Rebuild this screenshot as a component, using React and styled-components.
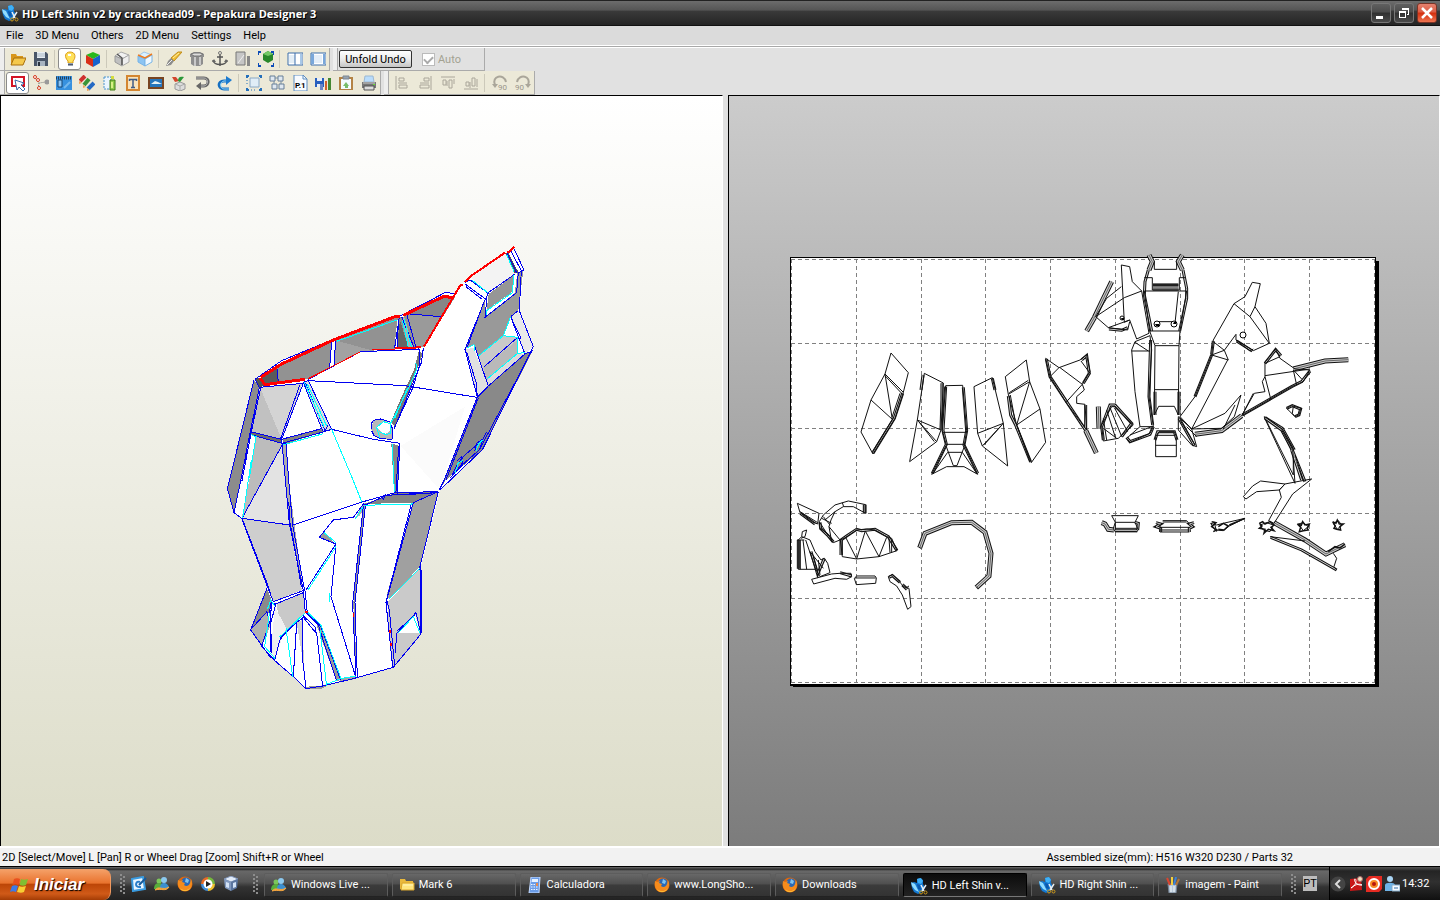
import React, { useState } from "react";
import styled, { createGlobalStyle } from "styled-components";

const GlobalStyle = createGlobalStyle`
    * {
        box-sizing: border-box;
    }
    body {
        margin: 0;
        overflow: hidden;
        font-family: Roboto, "Liberation Sans", sans-serif;
        font-size: 11px;
        color: #000;
        background: #e1e1e1;
    }
    button, input {
        font: inherit;
        color: inherit;
        padding: 0;
        margin: 0;
    }
`;

const WhaleIcon = () => (
    <Icon viewBox="0 0 18 18" $size={18}>
        <path d="M1 6l3-1 3 1 0-4 3-1 3 2 0 4 2 4-3 4-4 2-4-2-2-4z" fill="#1478d0" />
        <path d="M1 5l4 2 2 4 2 4-4-2-3-4z" fill="#8fdcff" />
        <path d="M7 2l4-1 2 3-2 3-3-1z" fill="#3fb0f6" />
        <path d="M7 7l3 1 1 5-3-1z" fill="#0b58ac" />
        <path d="M11 8l3 6M16 8l-4 6" stroke="#e8eef2" strokeWidth="1.5" />
        <circle cx="11" cy="15.5" r="1.5" fill="none" stroke="#cf9b1c" />
        <circle cx="15.5" cy="15.5" r="1.5" fill="none" stroke="#cf9b1c" />
    </Icon>
);

const FirefoxIcon = () => (
    <Icon viewBox="0 0 16 16">
        <circle cx="8" cy="8" r="7.5" fill="#e0680c" />
        <circle cx="9" cy="6.5" r="5" fill="#2b68b5" />
        <path d="M9 2l3 2-1 3-3-1z" fill="#7fc3ef" />
        <path d="M1 4l2 1 3-1-1 2 3 1-1 2c2 2 5 1 6-2l1-4c3 6-1 12-6 12S0 11 1 4z" fill="#f58b1c" />
        <path d="M3 12c3 3 8 3 11-1-1 4-9 6-11 1z" fill="#fdc53c" />
    </Icon>
);

const MessengerIcon = () => (
    <Icon viewBox="0 0 16 16">
        <circle cx="5" cy="5" r="2.5" fill="#7cc75a" />
        <path d="M0 13c0-4 2-6 5-6s4 2 5 4l-4 2z" fill="#58ad3c" />
        <circle cx="10" cy="4" r="3" fill="#8cc9ef" />
        <path d="M6 12c0-4 2-5 4-5s5 2 5 5l-4 1z" fill="#3b8fd0" />
        <path d="M1 14c4-5 8 1 14-3-3 5-8 1-14 3z" fill="#f4a640" stroke="#f4a640" />
    </Icon>
);

const FolderIcon = () => (
    <Icon viewBox="0 0 16 16">
        <path d="M1 2h5l1 2h7v3H3v5H1z" fill="#e9b93c" />
        <path d="M3 6h12v7H2z" fill="#ffe67e" stroke="#d9a52c" />
        <path d="M4 8h10" stroke="#fff6c0" />
    </Icon>
);

const CalcIcon = () => (
    <Icon viewBox="0 0 16 16">
        <path d="M4 0h9l-1 16H2z" fill="#6b9de8" stroke="#c5dbff" />
        <path d="M5 2h6v3H4.5z" fill="#e7f2ff" />
        <path d="M4 7.5h7M4 10h7M4 12.5h7" stroke="#eef5ff" strokeDasharray="1.5 1" />
        <path d="M9 6h2v3H9z" fill="#e78a4a" />
    </Icon>
);

const PaintIcon = () => (
    <Icon viewBox="0 0 16 16">
        <path d="M3 7h9l-1 9H4z" fill="#b8c8d8" stroke="#738091" />
        <path d="M5 8L2 1" stroke="#d94530" strokeWidth="2" />
        <path d="M7 8V0" stroke="#f3cf3c" strokeWidth="2" />
        <path d="M9 8l2-8" stroke="#3b82d8" strokeWidth="2" />
        <path d="M11 8l3-6" stroke="#b57536" strokeWidth="2" />
        <path d="M6 9v6M9 9v6" stroke="#f2f6fa" />
    </Icon>
);

const WindowsFlag = () => (
    <Icon viewBox="0 0 20 18" $size={20}>
        <path d="M4 3c2-1 4-1 6 0L8.5 9c-2-1-4-1-6 0z" fill="#e8501e" />
        <path d="M11 3c2 1 4 1 7 0l-2 6c-2 1-4 1-6.5 0z" fill="#80bf32" />
        <path d="M2 10c2-1 4-1 6 0l-2 6c-2-1-4-1-6 0z" fill="#3c7be8" />
        <path d="M9 10c2 1 4 1 7 0l-2 6c-2 1-4 1-7 0z" fill="#f8cf34" />
    </Icon>
);

// 16x16 drawings for the two tool strips
const glyphs = {
    open: (
        <>
            <path d="M1 3h5l1 2h6v3H4l-3 6z" fill="#d9971b" />
            <path d="M4 7h12l-3 7H1z" fill="#f5c94c" stroke="#a96f0d" />
        </>
    ),
    save: (
        <>
            <path d="M1 1h12l2 2v12H1z" fill="#4a5668" />
            <path d="M4 1h8v6H4z" fill="#e8eef4" />
            <path d="M4 10h8v5H4z" fill="#a8b4c0" />
            <path d="M5 11h2v4H5z" fill="#2c3440" />
            <path d="M4 3h8M4 5h8" stroke="#aab8c4" />
        </>
    ),
    bulb: (
        <>
            <path d="M8 1c6 0 6 6 3 9v2H6v-2C2 6 3 1 8 1z" fill="#ffe25b" stroke="#dc9d18" />
            <path d="M6 3h3v2H6z" fill="#fff" />
            <path d="M6 12h5v3H6z" fill="#9aa4b4" />
            <path d="M6 13.5h5" stroke="#4f5b70" />
        </>
    ),
    cube: (
        <>
            <path d="M1 4l7-3 7 3-7 4z" fill="#28b81c" />
            <path d="M1 4l7 4v8l-7-4z" fill="#d92f18" />
            <path d="M15 4L8 8v8l7-4z" fill="#1863cc" />
        </>
    ),
    box: (
        <>
            <path d="M1 5l6-4 8 3-7 4z" fill="#f2f2f2" stroke="#aaa" />
            <path d="M1 5l7 3v7l-7-4z" fill="#c0c0c0" stroke="#999" />
            <path d="M15 4L8 8v7l7-4z" fill="#eee" stroke="#aaa" />
            <path d="M3 3l5 4v7" fill="none" stroke="#555" strokeWidth="1.5" />
        </>
    ),
    boxBlue: (
        <>
            <path d="M1 5l6-4 8 3-7 4z" fill="#d9f0ff" stroke="#9cc6ea" />
            <path d="M1 5l7 3v7l-7-4z" fill="#8cc4f2" stroke="#78b4e6" />
            <path d="M15 4L8 8v7l7-4z" fill="#eef8ff" stroke="#78b4e6" />
            <path d="M1 4l7 3 7-4" fill="none" stroke="#ee7b1d" strokeWidth="1.5" />
        </>
    ),
    knife: (
        <>
            <path d="M5 7l7-6h4l-8 9z" fill="#f1bf32" stroke="#c08d1c" />
            <path d="M0 15l2-5 3-3 3 3-3 4z" fill="#8d8d8d" />
            <path d="M7 7l6-5" stroke="#fff0a8" />
            <path d="M1 14l5-5" stroke="#eee" />
        </>
    ),
    cylinder: (
        <>
            <path d="M1 3l4-2h6l4 2v3h-1v7l-3 2H5l-3-2V6H1z" fill="#8e8e8e" />
            <path d="M2 3l3-1h6l3 1-3 2H5z" fill="#ddd" stroke="#777" />
            <path d="M6 6v9M11 6v8" stroke="#c9c9c9" strokeWidth="2" />
        </>
    ),
    anchor: (
        <>
            <path d="M8 3v12M1 9c0 6 14 6 14 0M5 6h6" stroke="#555" strokeWidth="1.5" fill="none" />
            <path d="M0 11l2-3 2 3zM12 11l2-3 2 3z" fill="#666" />
            <circle cx="8" cy="2" r="1.5" fill="none" stroke="#777" />
        </>
    ),
    plane: (
        <>
            <path d="M1 1h9v13H1z" fill="#c6c6c6" stroke="#777" />
            <path d="M12 5h3v10h-3z" fill="#888" />
            <path d="M3 12l6-8" stroke="#eee" />
        </>
    ),
    fit: (
        <>
            <path d="M0 4V1h3M13 1h3v3M0 12v3h3M13 15h3v-3" stroke="#0c4bb8" strokeWidth="2" fill="none" />
            <path d="M5 3l5-3 5 3v6l-5 3-5-3z" fill="#28872a" />
            <path d="M5 3l5 2 5-2-5-3z" fill="#74c967" />
        </>
    ),
    split: (
        <>
            <path d="M1 2h15v12H1z" fill="#fff" stroke="#3d6eaa" />
            <path d="M2 4h6v8H2z" fill="#e4eef6" />
            <path d="M8 2v12" stroke="#3d6eaa" />
            <path d="M13 3h2v10h-2z" fill="#a8c8e8" />
        </>
    ),
    single: (
        <>
            <path d="M1 2h15v12H1z" fill="#fff" stroke="#3d6eaa" />
            <path d="M1 3h3v10H1zM13 3h2v10h-2z" fill="#79a7da" />
            <path d="M4 4h8v8H4z" fill="#e4eef8" />
        </>
    ),
    select: (
        <>
            <path d="M2 2h12v9H2z" fill="#fff" stroke="#d31425" strokeWidth="2" />
            <path d="M5 5l9 3-3 2 4 4-2 2-4-4-2 3z" fill="#fff" stroke="#3a6ca8" />
        </>
    ),
    edge: (
        <>
            <path d="M2 3l4 5 7-1M6 8l-1 6" stroke="#777" fill="none" strokeDasharray="1 1" />
            <circle cx="2" cy="2" r="1.5" fill="#fff" stroke="#d63a1e" />
            <circle cx="6" cy="13" r="1.5" fill="#fff" stroke="#d63a1e" />
            <circle cx="5" cy="5" r="1.5" fill="#fff" stroke="#d63a1e" />
            <circle cx="14" cy="7" r="2.5" fill="#999" />
        </>
    ),
    zip: (
        <>
            <path d="M0 1h16v14H0z" fill="#3791df" />
            <path d="M0 3h16" stroke="#24405c" strokeWidth="3" strokeDasharray="1 1" />
            <path d="M2 5h4v7H2z" stroke="#174674" fill="#8dc6f5" />
            <path d="M8 13l6-6" stroke="#73b8ef" strokeWidth="2" />
        </>
    ),
    pencils: (
        <>
            <path d="M1 6l5-5" stroke="#cf3130" strokeWidth="4" />
            <path d="M5 10l5-6" stroke="#3b9438" strokeWidth="4" />
            <path d="M9 14l6-6" stroke="#246ac4" strokeWidth="4" />
            <path d="M0 6l3 2-3 1zM4 10l3 2-3 1zM8 13l3 2-3 1z" fill="#f0a256" />
        </>
    ),
    glue: (
        <>
            <path d="M2 2h7v12H2z" fill="#eaf5ff" stroke="#4d94cc" strokeDasharray="2 1" />
            <path d="M8 5h5v10H8z" fill="#8fcb4a" stroke="#3f7d18" />
            <path d="M9 1h3v3H9z" fill="#d5dc3c" />
            <path d="M10 7v6" stroke="#d6ef86" strokeWidth="2" />
        </>
    ),
    text: (
        <>
            <path d="M2 1h12v14H2z" fill="#f8e3bd" stroke="#d48631" strokeWidth="2" />
            <path d="M4.5 6V4.5h7V6M8 4v9M6 12.5h4" fill="none" stroke="#405c86" strokeWidth="1.5" />
        </>
    ),
    picture: (
        <>
            <path d="M0 2h16v12H0z" fill="#784523" />
            <path d="M2 4h12v8H2z" fill="#2776bc" />
            <path d="M3 9l4-3 3 1 4 2z" fill="#e7f2f5" />
        </>
    ),
    fold: (
        <>
            <path d="M4 9l5-2 5 2v5l-5 2-5-2z" fill="#ddd" stroke="#999" />
            <path d="M1 2l4 0 3 4-4 1z" fill="#d3462e" />
            <path d="M7 6c0-4 2-5 6-4l-4 5z" fill="#2b9838" />
            <path d="M4 9l5 2 5-2M9 11v5" stroke="#aaa" fill="none" />
        </>
    ),
    undo: (
        <>
            <path d="M2 3h8c6 0 5 8 0 8H6" fill="none" stroke="#666" strokeWidth="3" />
            <path d="M2 3h8c5 0 4 8 0 8H6" fill="none" stroke="#bbb" />
            <path d="M7 7v8l-5-4z" fill="#666" />
        </>
    ),
    redo: (
        <>
            <path d="M12 14H7C1 14 0 6 7 6h4" fill="none" stroke="#166fc1" strokeWidth="3" />
            <path d="M12 14H7C3 14 2 7 7 6h4" fill="none" stroke="#8fd6fa" />
            <path d="M9 1v9l6-5z" fill="#1c7bd0" />
        </>
    ),
    frame: (
        <>
            <path d="M4 3h9v9H4z" fill="#e0edf7" stroke="#8aa8c4" />
            <path d="M1 3V1h2M13 1h2v2M1 13v2h2M13 15h2v-2" stroke="#2570bb" strokeWidth="2" fill="none" />
            <path d="M1 5v6M5 15h6" stroke="#2570bb" strokeDasharray="1 2" />
        </>
    ),
    grid: (
        <>
            <path d="M1 1h5v5H1zM9 1h5v5H9zM3 9h5v5H3zM10 9h5v5h-5z" fill="#dfe8f1" stroke="#667f98" />
            <path d="M6 3h3M5 6v3M12 6v3" stroke="#778da3" />
        </>
    ),
    chart: (
        <>
            <path d="M0 3h9v9H0z" fill="#275ebe" />
            <path d="M2 3h5v3H2zM2 9h5v3H2z" fill="#e7edf5" />
            <path d="M10 6h2v9h-2z" fill="#d1602c" />
            <path d="M13 3h3v12h-3z" fill="#448832" />
            <path d="M5 9h3v6H5z" fill="#6a86c6" />
        </>
    ),
    clip: (
        <>
            <path d="M1 2h14v13H1z" fill="#b48345" />
            <path d="M3 4h10v10H3z" fill="#f5fbff" />
            <path d="M5 1h6v3H5z" fill="#98a4b1" stroke="#7c8792" />
            <path d="M5 11l3-4 3 4zM7 10h3v3H7z" fill="#77bd6b" />
        </>
    ),
    printer: (
        <>
            <path d="M4 1h8l1 6H3z" fill="#b9dcfb" stroke="#9cb8d2" />
            <path d="M1 7h14v6H1z" fill="#777" />
            <path d="M3 11h10v4H3z" fill="#ddd" stroke="#555" />
            <path d="M2 8h12" stroke="#ccc" />
            <path d="M12 9.5h2" stroke="#6d3" />
        </>
    ),
    alignLeft: <path d="M2 1v14M5 3h5v3H5zM5 10h8v3H5zM4 8h9" fill="none" stroke="#aaa69a" />,
    alignRight: <path d="M14 1v14M7 3h5v3H7zM3 10h9v3H3zM3 8h9" fill="none" stroke="#aaa69a" />,
    alignTop: <path d="M1 2h14M3 5h3v5H3zM9 5h3v8H9zM7 6v5M14 4v5" fill="none" stroke="#aaa69a" />,
    alignBottom: <path d="M1 14h14M3 7h3v4H3zM9 3h3v8H9zM7 7v6M14 4v8" fill="none" stroke="#aaa69a" />,
    rotLeft: (
        <>
            <path d="M3 10c-4-9 9-12 11-3" fill="none" stroke="#aaa69a" strokeWidth="2" />
            <path d="M0 9h6l-3 4z" fill="#aaa69a" />
            <text x="6" y="15" fontSize="8" fill="#99958a">90</text>
        </>
    ),
    rotRight: (
        <>
            <path d="M13 10c4-9-9-12-11-3" fill="none" stroke="#aaa69a" strokeWidth="2" />
            <path d="M16 9h-6l3 4z" fill="#aaa69a" />
            <text x="0" y="15" fontSize="8" fill="#99958a">90</text>
        </>
    ),
    page: (
        <>
            <path d="M2 0h9l4 4v12H2z" fill="#f8fbff" stroke="#5d8cc0" />
            <path d="M11 0v4h4" fill="none" stroke="#5d8cc0" />
            <text x="3" y="13" fontSize="8" fontWeight="bold">P.1</text>
        </>
    ),
};

const ToolSet = ({ groups, active, onPick, disabled }) =>
    groups.map((group, i) => (
        <React.Fragment key={i}>
            {i > 0 && <Separator />}
            {group.map((name) => (
                <ToolButton
                    key={name}
                    aria-label={name}
                    disabled={disabled}
                    $active={active === name}
                    onClick={() => onPick && onPick(name)}
                >
                    <Icon viewBox="0 0 16 16">{glyphs[name]}</Icon>
                </ToolButton>
            ))}
        </React.Fragment>
    ));

// model faces, three units to a pixel, origin at the top of the part
const faces = [
    ["#fff", "105,418 185,362 340,298 540,228 675,158 705,160 722,132 750,110 855,38 880,22 912,90 898,212 940,320 788,628 660,750 603,978 603,1182 520,1282 408,1314 258,1346 220,1310 148,1248 92,1170 143,1042 65,835 42,818 22,745 30,715"],
    ["#8c8c8c", "102,420 118,442 90,580 62,722 42,818 22,745 30,715"],
    ["#555", "105,414 120,416 136,437 118,442"],
    ["#929292", "122,412 185,372 340,300 530,230 548,232 675,168 705,172 612,322 455,332 422,335 340,378 260,418 135,438"],
    ["#5a5a5a", "124,412 172,384 175,430 136,437"],
    ["#a2a2a2", "350,302 455,331 422,335 343,378"],
    ["#fff", "335,306 348,300 343,376 329,382"],
    ["#fff", "532,240 538,240 531,322 523,324"],
    ["#656565", "540,240 565,322 531,322"],
    ["#b0b0b0", "545,230 552,230 582,322 565,322"],
    ["#868686", "560,221 672,170 702,174 662,230"],
    ["#9a9a9a", "562,222 662,230 612,322 588,322"],
    ["#c1c1c1", "120,442 185,598 92,575"],
    ["#d4d4d4", "120,442 248,430 185,598"],
    ["#6b6b6b", "92,574 184,597 186,609 90,584"],
    ["#828282", "186,597 305,566 325,566 310,576 195,612"],
    ["#ddd", "250,427 265,422 335,568 308,573"],
    ["#bcbcbc", "108,590 188,610 65,835 88,720"],
    ["#e3e3e3", "188,610 208,855 65,835"],
    ["#adadad", "188,612 198,610 206,720 250,1052 240,1020 208,850"],
    ["#868686", "514,611 541,618 532,758 522,755"],
    ["#777", "597,330 608,342 573,440 524,560 512,548 545,470 582,390"],
    ["#f3f3f3", "750,110 855,38 888,100 805,160"],
    ["#555", "858,40 866,40 896,98 884,100"],
    ["#999", "735,328 794,180 795,232 884,160 892,100 910,92 895,212 872,230 850,285 775,348 762,314 745,320"],
    ["#969696", "806,162 882,105 878,155 800,210"],
    ["#c9c9c9", "850,287 895,294 893,340 798,424 775,348"],
    ["#b9b9b9", "790,382 893,300 893,340 800,418"],
    ["#e9e9e9", "872,230 895,212 940,320 915,342"],
    ["#fff", "872,232 903,295 855,285"],
    ["#e1e1e1", "735,330 760,322 805,438 772,472"],
    ["#dcdcdc", "805,438 796,425 893,338 915,342"],
    ["#898989", "772,472 805,440 915,342 938,332 788,628 676,722 660,748"],
    ["#fbfbfb", "542,618 735,500 660,750"],
    ["#cecece", "68,835 208,855 246,1050 160,1085"],
    ["#8a8a8a", "141,1045 158,1088 148,1118 92,1170"],
    ["#b0b0b0", "92,1170 141,1115 150,1160 125,1220"],
    ["#c9c9c9", "170,1090 250,1058 256,1118 183,1190"],
    ["#f0f0f0", "165,1100 198,1165 163,1258 152,1240"],
    ["#d0d0d0", "230,1148 248,1140 252,1280 240,1210"],
    ["#838383", "430,792 530,758 655,755 580,788"],
    ["#a0a0a0", "655,755 600,980 508,1077 500,1065 580,790"],
    ["#cacaca", "600,982 603,1182 520,1282 508,1200 502,1088"],
    ["#fff", "535,1180 586,1122 600,1180"],
    ["#969696", "430,790 436,792 405,1088 408,1314 400,1090"],
    ["#999", "298,892 310,878 348,912"],
    ["#a4a4a4", "358,1313 408,1312 404,1318 360,1326"],
    ["#999", "258,1340 320,1338 300,1348 262,1348"],
    ["#999", "290,1156 302,1156 362,1320 350,1324"],
    ["#b0b0b0", "405,835 432,788 440,795 420,826 400,838"],
    ["#b8b8b8", "453,565 461,542 482,537 510,546 518,568 516,598 480,596 462,587"],
    ["#fff", "470,560 488,545 510,548 514,570 492,585"],
];

const blueLines = [
    "105,418 185,362 340,298 540,228 675,158 705,160",
    "102,420 30,715 22,745 42,818 62,722 90,580 118,442 105,418",
    "62,722 66,722 93,580 122,444",
    "118,442 250,430 185,598 92,575",
    "92,584 186,610 310,576 335,568 265,422 250,427 308,573",
    "256,428 315,572 324,556",
    "240,434 181,598",
    "185,598 305,566",
    "185,598 208,850 250,1052",
    "190,610 198,610 206,720 218,855 254,1052",
    "202,780 210,810 208,840 220,900 228,945 244,1040",
    "188,612 66,835 208,855",
    "220,855 430,785 525,758 655,755",
    "265,422 420,430 555,437 770,472",
    "335,568 460,598 540,610 532,758",
    "536,618 528,756",
    "172,388 175,430",
    "335,306 329,382",
    "347,300 342,378",
    "538,232 524,324",
    "536,240 531,322",
    "545,230 582,322",
    "560,221 588,322",
    "560,221 662,230",
    "265,418 422,335 597,328",
    "597,325 600,370 580,440 522,566",
    "610,325 604,368 576,436 525,560",
    "455,568 453,552 461,541 482,537 510,546 518,568 516,598 480,596 462,587 455,572",
    "735,128 750,120 805,160 795,180 735,328 772,472",
    "735,132 795,176",
    "738,140 785,177",
    "792,186 741,324",
    "765,322 805,438 915,342 872,230 903,295",
    "740,336 768,426 772,470",
    "772,472 672,722 658,750",
    "775,474 678,720",
    "772,472 805,438",
    "880,22 912,90 895,98 890,158 795,232 802,160 884,103",
    "872,32 904,92 898,212 940,320 788,628 660,750",
    "862,40 890,98",
    "895,212 872,230",
    "915,342 935,334 780,626",
    "793,380 893,292",
    "695,710 712,672 735,645 788,600 778,630 730,672 690,714",
    "765,632 770,610 790,596 800,576",
    "712,662 724,650 728,668 708,695",
    "42,818 65,835 143,1042 160,1085 250,1052",
    "68,840 146,1042 154,1072",
    "141,1045 92,1170 148,1248 220,1310 258,1346 310,1338 408,1314 520,1282 603,1182 600,980 655,755",
    "95,1166 141,1115 148,1148 125,1220 165,1260",
    "148,1118 153,1090 160,1085",
    "156,1088 152,1120 150,1240",
    "160,1092 168,1090 152,1150 155,1240",
    "160,1095 250,1058",
    "255,1052 262,1118",
    "250,1052 256,1118 190,1182 178,1205 164,1260",
    "255,1130 225,1150 182,1194",
    "230,1150 220,1310",
    "248,1140 247,1250 258,1346",
    "248,1130 282,1172 290,1180 308,1340",
    "258,1118 295,1156 350,1324",
    "262,1118 302,1158 362,1320",
    "246,1140 250,1128 285,1160 286,1175",
    "348,912 258,1050",
    "340,840 298,892 348,912 333,1070 408,1314",
    "340,840 400,832 430,792 436,798 405,1088 412,1314",
    "430,798 398,1090 408,1314",
    "436,795 496,768 525,764 655,758",
    "655,755 580,788 498,1088 518,1280",
    "574,792 500,1078 508,1110 524,1278",
    "530,760 540,765 655,758",
    "486,772 490,778 498,764",
    "526,1240 530,1180 588,1118 603,1182",
    "530,1174 584,1126",
    "603,980 606,1180",
];

const cyanLines = [
    "335,568 395,710 425,785",
    "88,715 108,590 92,584",
    "68,835 94,660",
    "188,615 310,581",
    "253,427 312,560",
    "262,432 320,558",
    "548,244 565,322",
    "552,236 574,320",
    "350,304 530,240",
    "588,370 590,390 565,445 512,550",
    "562,445 524,535",
    "517,612 523,755",
    "432,796 578,792",
    "480,594 470,562 490,545 512,552 513,580 498,584 478,575",
    "860,44 883,97",
    "756,120 803,158",
    "800,225 800,212 877,158 882,106",
    "872,230 850,287 893,292 894,340 915,338",
    "850,287 775,348",
    "742,324 762,314 765,332",
    "800,418 893,340",
    "705,700 715,668 730,662",
    "768,632 776,612 788,600",
    "405,838 430,800",
    "312,878 348,908",
    "348,920 264,1050",
    "330,1060 330,1086",
    "600,984 508,1077",
    "142,1108 152,1081 165,1098",
    "148,1120 134,1220 165,1256",
    "198,1165 218,1310",
    "178,1192 254,1120",
    "264,1118 302,1154 364,1318",
    "300,1170 320,1338",
    "320,1333 362,1316 408,1308",
    "534,1180 580,1130 600,1180",
];

const redLines = [
    ["122,412 185,372 340,300 525,230 540,230", 3],
    ["120,414 135,434 255,418", 3],
    ["550,226 670,170 700,172", 3],
    ["612,320 722,134 730,134", 2],
    ["735,126 750,110 855,38", 2],
    ["862,38 870,34 882,20", 2],
    ["455,330 525,327", 1],
    ["525,325 604,322", 2],
    ["265,416 340,378 420,336", 1],
    ["254,1116 264,1116", 2],
    ["510,1170 512,1180", 2],
    ["512,1210 514,1218", 2],
    ["400,1120 402,1132", 1],
];

// unfolded parts, grouped by the corner they are measured from
const sheets = [
    {
        at: [785, 340],
        solid: [
            "M318,39 370,98 355,157 330,235 264,342 228,276 258,180 300,102 318,39",
            "M300,102 355,157 M300,107 350,160 M300,102 322,238 258,180 M345,160 321,232 M322,238 262,335",
            "M418,100 475,129 468,270 455,305 374,365 397,240 418,100",
            "M397,240 468,270 M397,240 455,305 M402,246 448,305",
            "M482,137 533,136 545,272 538,315 578,403 537,380 485,380 440,403 484,315 472,272 482,137",
            "M472,277 545,277 M484,313 538,313 M488,337 532,337 M484,320 505,377 516,377 538,320 M488,337 444,400 M532,337 575,400",
            "M567,140 622,113 655,250 668,378 592,318 578,280 567,140",
            "M578,280 655,250 592,318 M650,256 598,314",
            "M661,110 724,60 734,125 765,207 782,307 739,368 695,255 670,163 661,110",
            "M670,163 734,125 M673,158 730,121 M734,125 695,255 765,207 M676,165 690,240 M697,260 735,365",
            "M37,490 102,520 98,552 80,545 45,518 37,490 M45,515 98,548",
            "M242,494 242,520 205,500 175,500 150,515 138,540 132,560 165,600 145,608 128,582 105,565 103,545 115,525 150,495 190,483 242,494",
            "M172,488 176,500 M115,530 135,555 M235,494 235,518 M120,540 150,515 M105,548 130,588 M132,560 140,605 M110,535 140,550",
            "M166,600 182,592 215,570 245,567 270,570 305,590 320,595 336,632 282,650 215,657 172,650 166,600",
            "M182,592 215,657 241,573 282,650 305,592 M172,600 172,645 M312,595 315,638 M320,600 320,636",
            "M40,600 50,590 75,600 90,635 108,660 118,655 128,670 135,698 105,710 92,688 40,688 40,600",
            "M54,600 65,688 M62,600 92,688 M46,600 46,688 M75,635 115,685 M85,650 100,705 M100,660 105,705 M36,600 58,600 M50,590 52,575 65,570 60,590 48,595",
            "M80,718 140,702 M80,718 86,732 150,715 185,718 200,710 198,700 165,700 140,702",
            "M208,715 215,708 270,708 274,714 272,730 214,734 208,715 M210,714 272,714",
            "M310,710 322,704 348,730 355,740 372,745 378,800 368,808 352,765 335,738 315,725 310,710 M355,732 366,742 372,738",
            "M402,622 408,625 M575,740 578,746",
        ],
        tabs: [
            "M353,160 328,235 264,340",
            "M414,105 408,150 M471,130 471,180 468,268",
            "M482,140 474,272 484,313 442,400 M535,142 545,272 537,315 578,400",
            "M622,115 630,150",
            "M670,168 677,225 692,255 737,366",
            "M46,520 90,552 M105,547 107,566 130,588 145,606",
            "M168,645 168,600 185,588 215,568 230,572 270,568 310,590 336,632",
            "M40,600 40,686 M78,635 98,702 118,655",
            "M312,712 322,707 345,727 M352,735 366,748 M165,698 200,708",
            "M240,494 240,520",
        ],
        bands: ["M404,624 420,580 500,548 560,547 600,577 618,640 612,708 574,743"],
    },
    {
        at: [1035, 245],
        solid: [
            "M259,60 284,65 292,110 320,138 342,265 305,282 284,225 268,232 259,60",
            "M268,158 320,138 M259,125 215,160 182,215 220,248 284,225 M182,215 268,158 M220,248 278,255 284,230",
            "M358,50 358,73 425,73 425,50 M455,138 435,258 432,302 360,302 344,258 328,138",
            "M352,98 352,135 433,135 433,98 M354,118 430,118 M354,122 430,122 M328,138 455,138 M344,258 435,258 M420,235 430,140 M365,230 420,230 M360,302 358,510 371,484 418,484 430,510 432,302 M360,434 432,434 M328,98 352,98 M433,98 450,98",
            "M290,315 300,290 345,272 350,315 342,455 355,545 315,545 300,440 290,315 M290,318 345,318 M300,292 340,318",
            "M315,545 275,580 285,592 345,565 355,545 M285,570 350,545",
            "M362,575 372,560 418,560 424,575 424,635 362,635 362,575 M362,601 424,601 M366,571 420,571",
            "M652,112 676,116 660,185 693,235 703,295 655,317 603,285 603,268 568,316 580,345 530,330 535,285 597,176 630,155 652,112",
            "M597,176 645,215 703,295 M645,215 660,185 M603,285 645,318 655,312 M530,330 568,316 M535,290 568,316",
            "M530,330 480,455 435,515 470,552 578,345",
            "M470,552 570,505 618,450 598,515 560,550 470,552 M600,480 565,552",
            "M430,515 470,552 485,605 470,600 430,555 430,515 M435,525 480,600 M455,545 485,575",
            "M620,512 770,425 805,410 825,375 780,372 735,340 722,312 690,352 690,395 682,410 690,440 658,445 620,512",
            "M690,392 825,372 M690,355 735,335 M690,395 708,465 M775,375 785,420 M655,445 622,510 M780,380 800,402",
            "M32,340 72,368 135,345 155,330 165,380 142,418 148,435 125,455 125,475 150,478 155,555 93,472 45,395 32,340",
            "M72,368 45,395 M75,368 142,418 93,472 M138,348 165,385",
            "M230,485 200,540 205,588 250,580 295,540 240,485 230,485",
            "M215,495 242,580 M225,488 260,575 M238,488 278,560 M243,490 290,535 M205,550 245,580 M205,520 215,585",
            "M755,490 770,482 798,490 792,510 780,515 755,490 M775,485 772,505 780,515",
            "M688,515 735,548 800,680 M688,515 775,690 M740,550 775,610 775,690",
        ],
        tabs: [
            "M222,252 260,256 278,248",
            "M340,75 330,110 328,150 350,258 M444,75 455,130 455,160 434,258",
            "M354,120 430,120 M354,132 430,132",
            "M347,285 342,455 353,540 M360,440 360,510 M432,440 432,510",
            "M530,330 480,455 M605,288 652,318 M535,288 530,328",
            "M690,355 722,314 738,332 M825,378 800,410 770,425 622,510",
            "M34,342 45,395 152,556 M152,480 152,550 M140,345 155,332 163,385 145,415",
            "M205,585 200,545 225,480 240,480 290,535 260,575",
            "M432,520 478,602 M275,577 285,590 345,568 355,545",
            "M360,585 368,560 418,560 426,585 M755,490 772,482 797,492 792,510 780,515",
            "M690,518 742,550 778,615",
        ],
        bands: [
            "M230,110 203,165 178,218",
            "M178,218 155,258",
            "M342,30 352,50 342,75 M442,30 430,50 442,75",
            "M152,556 184,624",
            "M190,485 192,552",
            "M775,372 870,348 940,344",
            "M480,568 560,557 620,512",
        ],
    },
    {
        at: [1090, 400],
        solid: [
            "M523,52 615,250 M575,90 608,148 615,250 M615,165 640,240",
            "M460,290 488,258 512,243 585,252 568,270 500,275 468,297 460,290 M568,270 585,252 648,240 665,237 608,282 552,370 536,362 574,292 568,270",
            "M540,410 645,423 M740,510 732,500 740,475 730,460",
            "M65,347 145,347 135,367 145,390 140,395 75,395 70,385 76,367 65,347 M76,367 135,367 M76,385 140,385 M76,367 76,390",
            "M218,362 290,362 298,372 M298,396 210,396 210,372 M218,366 290,366 M210,382 298,382 M210,390 298,390",
            "M362,370 380,375 400,370 465,355 418,378 400,392 375,390 362,370 M372,365 380,395",
            "M510,375 530,368 550,375 540,395 520,390 510,375 M625,372 640,368 655,380 640,392 625,372 M730,370 745,362 755,375 742,388 730,370",
        ],
        tabs: [
            "M525,54 575,90 605,145 645,245 M605,150 635,240",
            "M542,412 635,450 740,510",
            "M76,392 142,392 M135,367 145,370 143,390",
            "M198,368 212,372 198,380 212,385 212,396 M312,368 298,372 308,380 298,385 298,396",
        ],
        bands: ["M552,368 645,420 708,462 765,434", "M35,368 45,372 55,388 72,390"],
        joints: [
            "M365,365 378,368 365,380 380,390 370,395 M385,380 400,370 415,378 402,390 385,388 M418,375 465,355",
            "M508,370 518,365 525,372 540,365 552,375 543,382 552,392 535,388 522,400 525,388 508,385 516,378 508,370",
            "M622,372 634,376 638,365 645,375 658,372 652,385 655,390 640,392 628,395 632,382 622,372",
            "M728,365 738,370 742,360 748,372 760,372 750,380 752,390 740,388 732,385 736,378 728,365",
            "M715,455 735,440 750,444 765,432",
        ],
    },
];

const ModelView = () => (
    <Drawing viewBox="1 96 721 750" role="img" aria-label="3D model">
        <g transform="translate(220 240) scale(0.3333)" shapeRendering="crispEdges">
            {faces.map(([fill, points], i) => (
                <polygon key={i} points={points} fill={fill} />
            ))}
            {blueLines.map((points, i) => (
                <Edge key={i} points={points} stroke="#0000f0" />
            ))}
            {cyanLines.map((points, i) => (
                <Edge key={i} points={points} stroke="#00ffff" />
            ))}
            {redLines.map(([points, weight], i) => (
                <Edge key={i} points={points} stroke="#ff0000" strokeWidth={weight} />
            ))}
        </g>
    </Drawing>
);

const Outlines = ({ runs, stroke, weight }) =>
    runs.map((d, i) => <Outline key={i} d={d} stroke={stroke} strokeWidth={weight} />);

const PaperView = () => (
    <Drawing viewBox="729 96 710 750" role="img" aria-label="2D pattern">
        <g shapeRendering="crispEdges">
            <rect x="793" y="261" width="586" height="426" fill="#000" />
            <rect x="790" y="257" width="586" height="429" fill="#000" />
            <rect x="791" y="258" width="584" height="426" fill="#fff" />
            <g stroke="#808080" strokeDasharray="4 3">
                {[791, 856, 921, 985, 1050, 1115, 1180, 1244, 1309, 1374].map((x) => (
                    <line key={x} x1={x + 0.5} x2={x + 0.5} y1="259" y2="684" />
                ))}
                {[259, 343, 428, 513, 598, 682].map((y) => (
                    <line key={y} x1="791" x2="1375" y1={y + 0.5} y2={y + 0.5} />
                ))}
            </g>
        </g>
        {sheets.map(({ at, solid, tabs, bands, joints = [] }) => (
            <g key={at[0]} transform={`translate(${at[0]} ${at[1]}) scale(0.3333)`}>
                <Outlines runs={bands} stroke="#111" weight="5" />
                <Outlines runs={bands} stroke="#ccc" weight="3" />
                <Outlines runs={bands} stroke="#666" weight="1" />
                <Outlines runs={tabs} stroke="#111" weight="3" />
                <Outlines runs={tabs} stroke="#ccc" weight="1" />
                <Outlines runs={solid} stroke="#111" weight="1" />
                <Outlines runs={joints} stroke="#111" weight="1.5" />
            </g>
        ))}
        <g fill="#fff" stroke="#000">
            <circle cx="1157" cy="324" r="3" />
            <circle cx="1174" cy="324" r="3" />
            <circle cx="1122" cy="318" r="2" />
            <circle cx="1243" cy="335" r="3" />
        </g>
        <path d="M1155 324h4v2h-3zM1173 324h3v-2h-2zM1121 318h3v2h-2z" fill="#000" />
    </Drawing>
);

const tasks = [
    ["Windows Live ...", MessengerIcon],
    ["Mark 6", FolderIcon],
    ["Calculadora", CalcIcon],
    ["www.LongSho...", FirefoxIcon],
    ["Downloads", FirefoxIcon],
    ["HD Left Shin v...", WhaleIcon],
    ["HD Right Shin ...", WhaleIcon],
    ["imagem - Paint", PaintIcon],
];

const Dots = () => (
    <Grip viewBox="0 0 6 20" aria-hidden="true">
        {[1, 5, 9, 13, 17].map((y) => (
            <g key={y} fill="#8d8d8d">
                <rect x="0" y={y - 1} width="2" height="2" />
                <rect x="3" y={y + 1} width="2" height="2" />
            </g>
        ))}
    </Grip>
);

const App = () => {
    const [tool, setTool] = useState("select");
    const [light, setLight] = useState("bulb");
    const [task, setTask] = useState("HD Left Shin v...");

    return (
        <Desktop>
            <GlobalStyle />
            <TitleBar>
                <WhaleIcon />
                <Title>HD Left Shin v2 by crackhead09 - Pepakura Designer 3</Title>
                <WindowButton aria-label="Minimize">
                    <Icon viewBox="0 0 18 18" $size={18}>
                        <path d="M4 12h7v3H4z" fill="#fff" />
                    </Icon>
                </WindowButton>
                <WindowButton aria-label="Restore">
                    <Icon viewBox="0 0 18 18" $size={18}>
                        <path d="M7 4h7v7h-2v-1h1V6H7zM4 7h7v7H4zM5 9v4h5V9z" fill="#fff" fillRule="evenodd" />
                    </Icon>
                </WindowButton>
                <WindowButton aria-label="Close" $close>
                    <Icon viewBox="0 0 18 18" $size={18}>
                        <path d="M4 4l10 10M14 4L4 14" stroke="#fff" strokeWidth="2.5" />
                    </Icon>
                </WindowButton>
            </TitleBar>

            <MenuBar>
                {["File", "3D Menu", "Others", "2D Menu", "Settings", "Help"].map((item) => (
                    <MenuItem key={item}>{item}</MenuItem>
                ))}
            </MenuBar>

            <ToolRow>
                <ToolStrip>
                    <ToolSet
                        groups={[
                            ["open", "save"],
                            ["bulb", "cube"],
                            ["box", "boxBlue"],
                            ["knife", "cylinder", "anchor", "plane", "fit"],
                            ["split", "single"],
                        ]}
                        active={light}
                        onPick={setLight}
                    />
                </ToolStrip>
                <ToolStrip $plain>
                    <UnfoldButton>Unfold Undo</UnfoldButton>
                    <AutoLabel>
                        <AutoBox type="checkbox" defaultChecked disabled />
                        Auto
                    </AutoLabel>
                </ToolStrip>
            </ToolRow>
            <ToolRow>
                <ToolStrip>
                    <ToolSet
                        groups={[
                            ["select", "edge", "zip", "pencils", "glue", "text", "picture", "fold", "undo", "redo"],
                            ["frame", "grid", "page", "chart", "clip", "printer"],
                        ]}
                        active={tool}
                        onPick={setTool}
                    />
                </ToolStrip>
                <ToolStrip>
                    <ToolSet
                        groups={[
                            ["alignLeft", "alignRight", "alignTop", "alignBottom"],
                            ["rotLeft", "rotRight"],
                        ]}
                        disabled
                    />
                </ToolStrip>
            </ToolRow>

            <Workspace>
                <Pane $top="#ffffff" $bottom="#dcdcc8">
                    <ModelView />
                </Pane>
                <Pane $top="#cccccc" $bottom="#7c7c7c">
                    <PaperView />
                </Pane>
            </Workspace>

            <StatusBar>
                <span>2D [Select/Move] L [Pan] R or Wheel Drag [Zoom] Shift+R or Wheel</span>
                <Size>Assembled size(mm): H516 W320 D230 / Parts 32</Size>
            </StatusBar>

            <TaskBar>
                <StartButton>
                    <WindowsFlag />
                    Iniciar
                </StartButton>
                <Dots />
                <QuickLaunch>
                    <QuickButton aria-label="Notes">
                        <Icon viewBox="0 0 16 16">
                            <path d="M1 3l11-2 2 12-12 2z" fill="#e9f6ff" stroke="#3a9be0" strokeWidth="2" />
                            <path d="M9 6c-4-2-6 5-1 5h2" fill="none" stroke="#2a7ec9" strokeWidth="2" />
                            <path d="M8 9l7-7" stroke="#165a9b" strokeWidth="2" />
                        </Icon>
                    </QuickButton>
                    <QuickButton aria-label="Messenger">
                        <MessengerIcon />
                    </QuickButton>
                    <QuickButton aria-label="Firefox">
                        <FirefoxIcon />
                    </QuickButton>
                    <QuickButton aria-label="Media player">
                        <Icon viewBox="0 0 16 16">
                            <path d="M8 1a7 7 0 0 0-7 7h7z" fill="#e56a25" />
                            <path d="M8 1a7 7 0 0 1 7 7H8z" fill="#75b83c" />
                            <path d="M1 8a7 7 0 0 0 7 7V8z" fill="#418ed9" />
                            <path d="M15 8a7 7 0 0 1-7 7V8z" fill="#f1c12f" />
                            <circle cx="8" cy="8" r="4.5" fill="#fff" />
                            <path d="M6 5l5 3-5 3z" fill="#222" />
                        </Icon>
                    </QuickButton>
                    <QuickButton aria-label="VirtualBox">
                        <Icon viewBox="0 0 16 16">
                            <path d="M1 3l7-3 7 3-7 3z" fill="#e1ebf8" stroke="#7e94b8" />
                            <path d="M1 3l7 3v9l-6-3z" fill="#8199bf" />
                            <path d="M15 3L8 6v9l6-3z" fill="#5a759f" />
                            <path d="M3 6l3 1v5l-3-1zM10 7l3-1v5l-3 1z" fill="#d3e2f5" />
                        </Icon>
                    </QuickButton>
                </QuickLaunch>
                <Dots />
                <Tasks>
                    {tasks.map(([name, TaskIcon]) => (
                        <Task key={name} $active={task === name} onClick={() => setTask(name)}>
                            <TaskIcon />
                            {name}
                        </Task>
                    ))}
                </Tasks>
                <Dots />
                <Language>PT</Language>
                <Tray>
                    <Icon viewBox="0 0 16 16">
                        <circle cx="8" cy="8" r="7.5" fill="#444" />
                        <path d="M10 4L6 8l4 4" fill="none" stroke="#ddd" strokeWidth="2" />
                    </Icon>
                    <Icon viewBox="0 0 16 16">
                        <path d="M2 3l11-1 1 12-12 1z" fill="#c81717" />
                        <path d="M3 12c5-2 6-9 4-9s1 7 7 6c-3-2-8 0-11 3z" fill="none" stroke="#fff" />
                        <circle cx="12" cy="3" r="2.5" fill="#eee2c0" stroke="#a66" />
                    </Icon>
                    <Icon viewBox="0 0 16 16">
                        <path d="M3 0h13v13l-3 3H0V3z" fill="#e52b22" />
                        <circle cx="8" cy="8" r="5" fill="#f78b24" stroke="#fff" strokeWidth="2" />
                        <circle cx="8" cy="8" r="2" fill="#b8160e" />
                    </Icon>
                    <Icon viewBox="0 0 16 16">
                        <circle cx="6" cy="3" r="3" fill="#a9d5f5" />
                        <path d="M1 15V9c0-3 10-3 10 0v6z" fill="#6eb4e8" />
                        <path d="M8 9h8v6H8z" fill="#f6fbff" stroke="#83abca" />
                        <path d="M10 12h4" stroke="#346da4" />
                    </Icon>
                    <Clock>14:32</Clock>
                </Tray>
            </TaskBar>
        </Desktop>
    );
};

const Desktop = styled.div`
    display: flex;
    flex-direction: column;
    height: 100vh;
`;

const Icon = styled.svg`
    display: block;
    flex: none;
    width: ${(props) => props.$size || 16}px;
    height: ${(props) => props.$size || 16}px;
`;

const TitleBar = styled.header`
    display: flex;
    align-items: center;
    gap: 3px;
    height: 26px;
    padding: 0 3px 0 1px;
    border-top: 1px solid #222;
    border-bottom: 1px solid #111;
    background: linear-gradient(#6c6c6c, #555 38%, #3a3a3a 42%, #242424);
`;

const Title = styled.h1`
    flex: 1;
    margin: 0;
    font-family: "Open Sans", sans-serif;
    font-size: 11px;
    font-weight: bold;
    color: #fff;
    text-shadow: 1px 1px 0 #000;
`;

const WindowButton = styled.button`
    display: grid;
    place-items: center;
    width: 20px;
    height: 20px;
    border: 1px solid ${(props) => (props.$close ? "#7c3427" : "#777")};
    border-radius: 3px;
    background: ${(props) =>
        props.$close
            ? "linear-gradient(#e58270, #dc5b42 45%, #d42e0d 50%, #ee7450)"
            : "linear-gradient(#606060, #4b4b4b 45%, #303030 50%, #4a4a4a)"};
`;

const MenuBar = styled.nav`
    display: flex;
    height: 22px;
    padding-bottom: 3px;
    background: #dbdbdb;
    border-bottom: 1px solid #fff;
    box-shadow: inset 0 -1px #a8a8a8, inset 0 -2px #fff;
`;

const MenuItem = styled.button`
    padding: 0 6px;
    border: 0;
    background: none;
`;

const ToolRow = styled.div`
    display: flex;
    gap: 3px;
    height: 23px;
    background: #e1e1e1;
    &:last-of-type {
        height: 24px;
    }
`;

const ToolStrip = styled.div`
    display: flex;
    align-items: center;
    padding-right: ${(props) => (props.$plain ? 23 : 0)}px;
    background: ${(props) => (props.$plain ? "#e1e1e1" : "#ece9d8")};
    border-right: 1px solid #aaa;
    border-bottom: 1px solid #aaa;
    &::before {
        content: "";
        width: 4px;
        margin-right: 1px;
        align-self: stretch;
        background: #eee;
        border-right: 1px solid #aaa;
    }
`;

const ToolButton = styled.button`
    display: grid;
    place-items: center;
    width: 23px;
    height: 22px;
    border: 1px solid ${(props) => (props.$active ? "#8b8b8b" : "transparent")};
    border-radius: 3px;
    background: ${(props) => (props.$active ? "#fff" : "none")};
`;

const Separator = styled.span`
    width: 1px;
    height: 18px;
    margin: 0 3px 0 2px;
    background: #ccc9ba;
`;

const UnfoldButton = styled.button`
    width: 73px;
    height: 18px;
    border: 1px solid #333;
    border-radius: 2px;
    background: linear-gradient(#fff, #ececec 50%, #c4c4c4);
`;

const AutoLabel = styled.label`
    display: flex;
    align-items: center;
    gap: 3px;
    margin-left: 10px;
    color: #a3a191;
`;

const AutoBox = styled.input`
    display: grid;
    place-items: center;
    appearance: none;
    width: 13px;
    height: 13px;
    border: 1px solid #bbb;
    background: #fff;
    &:checked::before {
        content: "";
        width: 7px;
        height: 4px;
        border: solid #aaa;
        border-width: 0 0 2px 2px;
        transform: rotate(-45deg);
    }
`;

const Workspace = styled.main`
    display: grid;
    grid-template-columns: 723fr 712fr;
    gap: 5px;
    flex: 1;
    min-height: 0;
    background: #e1e1e1;
`;

const Pane = styled.section`
    min-width: 0;
    min-height: 0;
    border: solid #000;
    border-width: 1px 0 0 1px;
    border-right: 1px solid #fff;
    background: linear-gradient(${(props) => props.$top}, ${(props) => props.$bottom});
`;

const Drawing = styled.svg`
    display: block;
    width: 100%;
    height: 100%;
`;

const Edge = styled.polyline`
    fill: none;
    vector-effect: non-scaling-stroke;
`;

const Outline = styled.path`
    fill: none;
    vector-effect: non-scaling-stroke;
`;

const StatusBar = styled.footer`
    display: flex;
    align-items: center;
    justify-content: space-between;
    height: 20px;
    padding: 0 2px;
    border-top: 2px solid #fff;
    background: #f2f2f2;
`;

const Size = styled.span`
    padding-right: 145px;
`;

const TaskBar = styled.footer`
    display: flex;
    align-items: center;
    height: 34px;
    border-top: 1px solid #000;
    color: #fff;
    background: linear-gradient(#6c6c6c, #2c2c2c 7%, #686868 12%, #555 45%, #333 60%, #222);
`;

const StartButton = styled.button`
    display: flex;
    align-items: center;
    gap: 4px;
    align-self: flex-end;
    width: 111px;
    height: 31px;
    padding-left: 10px;
    margin-right: 9px;
    border: 0;
    border-right: 1px solid #f09960;
    border-radius: 0 8px 8px 0;
    color: #fff;
    font: italic bold 17px "Liberation Sans", sans-serif;
    text-shadow: 1px 1px 1px #000;
    background: linear-gradient(#f5a26a, #e9732e 45%, #bd4607 50%, #d05a18 80%, #a33c05);
`;

const Grip = styled.svg`
    flex: none;
    width: 6px;
    height: 20px;
`;

const QuickLaunch = styled.div`
    display: flex;
    padding: 0 6px 0 1px;
    margin-right: 5px;
`;

const QuickButton = styled.button`
    display: grid;
    place-items: center;
    width: 23px;
    height: 24px;
    border: 0;
    background: none;
`;

const Tasks = styled.div`
    display: flex;
    flex: 1;
    gap: 4px;
    min-width: 0;
    padding: 2px 9px 0 5px;
`;

const Task = styled.button`
    display: flex;
    align-items: center;
    gap: 4px;
    flex: 1 0 0;
    min-width: 0;
    height: 24px;
    padding: ${(props) => (props.$active ? "2px 6px 0 6px" : "0 6px")};
    border: 1px solid ${(props) => (props.$active ? "#000" : "#5d5d5d")};
    border-bottom-color: ${(props) => (props.$active ? "#777" : "#222")};
    border-radius: 2px;
    white-space: nowrap;
    background: ${(props) =>
        props.$active ? "linear-gradient(#0c0c0c, #222)" : "linear-gradient(#686868, #4f4f4f 45%, #3b3b3b 50%, #333)"};
`;

const Language = styled.span`
    flex: none;
    width: 14px;
    margin: 0 12px 0 6px;
    line-height: 15px;
    text-align: center;
    background: #bdbdbd;
    color: #000;
`;

const Tray = styled.div`
    display: flex;
    align-items: center;
    align-self: stretch;
    gap: 2px;
    flex: none;
    width: 111px;
    border-left: 1px solid #000;
    background: linear-gradient(#555, #242424 12%, #303030 45%, #101010);
`;

const Clock = styled.time`
    white-space: nowrap;
`;

export default App;
